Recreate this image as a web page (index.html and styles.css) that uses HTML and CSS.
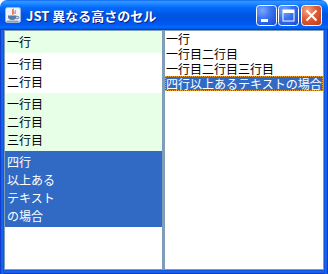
FILE: index.html
```html
<!DOCTYPE html>
<html lang="ja">
<head>
<meta charset="utf-8">
<title>JST 異なる高さのセル</title>
<link rel="stylesheet" href="styles.css">
</head>
<body>
<div class="window">
  <div class="titlebar">
    <svg class="app-icon" width="16" height="16" viewBox="0 0 16 16">
      <rect x="0.5" y="0.5" width="15" height="15" rx="2" fill="#eef2fa" stroke="#9fb3d6"/>
      <path d="M8.5 2 C6.5 3.5 9.5 5 7.5 7.5" fill="none" stroke="#e2501c" stroke-width="1.4"/>
      <path d="M10.5 3.5 C9.5 4.5 10.8 5.5 9.8 7" fill="none" stroke="#e2501c" stroke-width="1"/>
      <path d="M3 8.5 h8.5 v1.5 c0 2 -2 3 -4.25 3 S3 12 3 10 z" fill="#5878a8"/>
      <path d="M11.5 9.5 h1.3 a1.1 1.1 0 0 1 0 2.2 h-1.6" fill="none" stroke="#5878a8" stroke-width="1"/>
      <path d="M2 14.2 h11.5" stroke="#5878a8" stroke-width="1"/>
    </svg>
    <span class="title">JST 異なる高さのセル</span>
    <div class="controls">
      <svg class="ctl" width="21" height="21" viewBox="0 0 21 21">
        <defs>
          <radialGradient id="gb" cx="0.3" cy="0.25" r="0.9">
            <stop offset="0" stop-color="#7aa8ff"/>
            <stop offset="0.45" stop-color="#3b74f0"/>
            <stop offset="1" stop-color="#1d4fd8"/>
          </radialGradient>
          <radialGradient id="gr" cx="0.3" cy="0.25" r="0.9">
            <stop offset="0" stop-color="#f4a98c"/>
            <stop offset="0.45" stop-color="#e0603a"/>
            <stop offset="1" stop-color="#c2401c"/>
          </radialGradient>
        </defs>
        <rect x="0.5" y="0.5" width="20" height="20" rx="3" fill="url(#gb)" stroke="#fff"/>
        <rect x="5" y="14" width="7" height="3" fill="#fff"/>
      </svg>
      <svg class="ctl" width="21" height="21" viewBox="0 0 21 21">
        <rect x="0.5" y="0.5" width="20" height="20" rx="3" fill="url(#gb)" stroke="#fff"/>
        <rect x="5" y="5" width="11" height="11" fill="none" stroke="#fff" stroke-width="1"/>
        <rect x="5" y="5" width="11" height="3" fill="#fff"/>
      </svg>
      <svg class="ctl ctl-close" width="21" height="21" viewBox="0 0 21 21">
        <rect x="0.5" y="0.5" width="20" height="20" rx="3" fill="url(#gr)" stroke="#fff"/>
        <path d="M5.5 5.5 L15.5 15.5 M15.5 5.5 L5.5 15.5" stroke="#fff" stroke-width="2"/>
      </svg>
    </div>
  </div>
  <div class="client">
    <div class="pane pane-left">
      <div class="cell cell-green"><span class="line">一行</span></div>
      <div class="cell"><span class="line">一行目</span><span class="line">二行目</span></div>
      <div class="cell cell-green"><span class="line">一行目</span><span class="line">二行目</span><span class="line">三行目</span></div>
      <div class="cell cell-selected"><span class="line">四行</span><span class="line">以上ある</span><span class="line">テキスト</span><span class="line">の場合</span></div>
    </div>
    <div class="pane pane-right">
      <div class="item">一行</div>
      <div class="item">一行目二行目</div>
      <div class="item">一行目二行目三行目</div>
      <div class="item item-selected">四行以上あるテキストの場合</div>
    </div>
  </div>
</div>
</body>
</html>
```
FILE: styles.css
```css
html, body {
  margin: 0;
  padding: 0;
  background: #ffffff;
}

.window {
  width: 328px;
  height: 274px;
  display: flex;
  flex-direction: column;
  border-radius: 7px 7px 0 0;
  overflow: hidden;
  font-family: "Noto Sans CJK JP", "Noto Sans", sans-serif;
}

.titlebar {
  height: 30px;
  flex: none;
  display: flex;
  align-items: center;
  padding: 0 6px 0 5px;
  background: linear-gradient(to bottom,
    #0058ee 0px, #3593ff 1px, #288eff 3px, #127dff 5px, #0369fc 8px,
    #0262ee 11px, #0057e5 14px, #0054e3 18px, #0055eb 22px, #005bf5 25px,
    #026afe 27px, #0062ef 28px, #0052d6 29px, #0040ab 30px);
}

.app-icon {
  flex: none;
  margin-right: 5px;
}

.title {
  flex: 1;
  color: #ffffff;
  font-weight: bold;
  font-size: 13px;
  white-space: nowrap;
  text-shadow: 1px 1px 0 #0a1e8a;
}

.controls {
  display: flex;
  align-items: center;
  gap: 1px;
}

.ctl {
  display: block;
}

.ctl-close {
  margin-left: 1px;
}

.client {
  flex: 1;
  display: flex;
  padding: 0 4px 4px 4px;
  min-height: 0;
  background:
    linear-gradient(to right, #0a2ec8, #1d6cf2 50%, #0b4fd9) left top / 4px 100% no-repeat,
    linear-gradient(to left, #0a2ec8, #1d6cf2 50%, #0b4fd9) right top / 4px 100% no-repeat,
    linear-gradient(to top, #0a2ec8, #1d6cf2 50%, #0b4fd9) left bottom / 100% 4px no-repeat,
    #0b4fd9;
}

.pane {
  background: #ffffff;
  border: 1px solid #7f9db9;
  overflow: hidden;
}

.pane-left {
  width: 157px;
  flex: none;
}

.pane-right {
  flex: 1;
  border-left-width: 2px;
}

.cell {
  padding: 2px;
  font-size: 12px;
  line-height: 18px;
  color: #000000;
}

.line {
  display: block;
  height: 18px;
  white-space: nowrap;
}

.cell-green {
  background: #e6ffe6;
}

.cell-selected {
  background: #316ac5;
  color: #ffffff;
}

.item {
  height: 15px;
  line-height: 15px;
  padding-left: 1px;
  font-size: 12px;
  color: #000000;
  white-space: nowrap;
}

.item-selected {
  background: #316ac5;
  color: #ffffff;
  outline: 1px dotted #f0a030;
  outline-offset: -1px;
}
```
